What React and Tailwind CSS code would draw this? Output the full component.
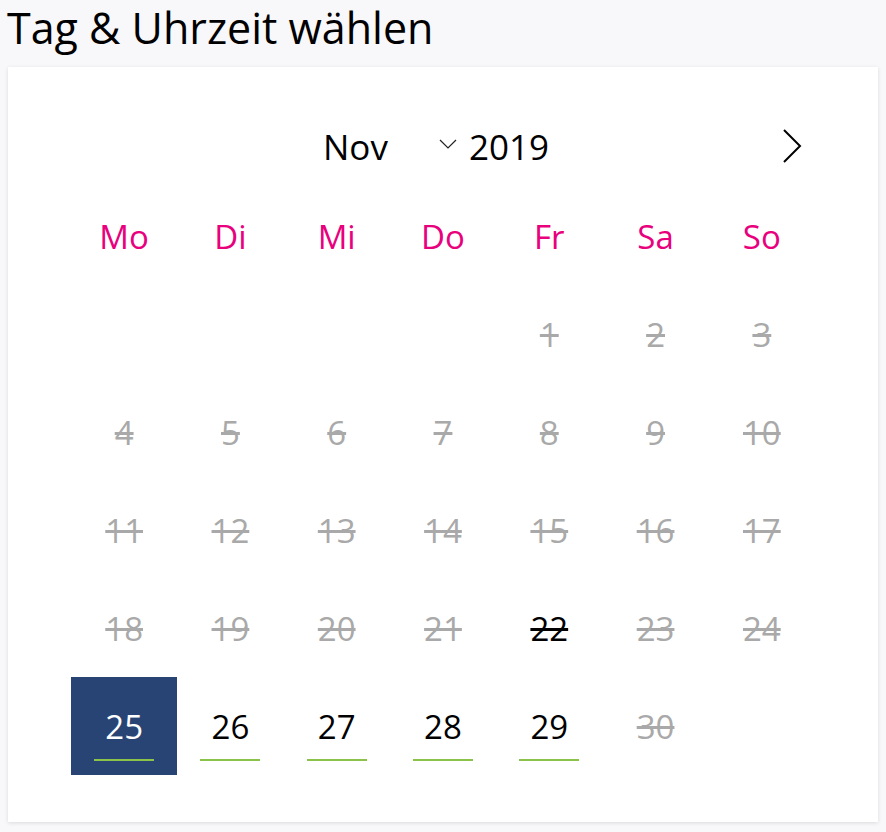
// Datepicker: Tag & Uhrzeit wählen
const WEEKDAYS = ['Mo', 'Di', 'Mi', 'Do', 'Fr', 'Sa', 'So'];

// Nov 2019 starts on Friday -> 4 empty cells
const OFFSET = 4;
const AVAILABLE = [25, 26, 27, 28, 29];
const SELECTED = 25;
const TODAY = 22;

function ChevronRight() {
  return (
    <svg width="22" height="36" viewBox="0 0 22 36" fill="none">
      <path d="M3 2 L19 18 L3 34" stroke="#000" strokeWidth="2" />
    </svg>
  );
}

function ChevronDown() {
  return (
    <svg width="18" height="10" viewBox="0 0 18 10" fill="none">
      <path d="M1 1 L9 9 L17 1" stroke="#222" strokeWidth="1.2" />
    </svg>
  );
}

function DayCell({ day }) {
  if (!day) return <div className="h-[98px]" />;
  const isSelected = day === SELECTED;
  const isAvailable = AVAILABLE.includes(day);
  const isToday = day === TODAY;

  let textCls = 'text-[#a9a9a9] line-through';
  if (isToday) textCls = 'text-black line-through';
  if (isAvailable) textCls = 'text-black';
  if (isSelected) textCls = 'text-white';

  return (
    <div
      className={`relative h-[98px] flex items-center justify-center ${
        isSelected ? 'bg-[#284475]' : ''
      }`}
    >
      <span className={`text-[33px] leading-none ${textCls}`}>{day}</span>
      {isAvailable && (
        <span className="absolute left-1/2 -translate-x-1/2 bottom-[14px] w-[60px] h-[2px] bg-[#8bc34a]" />
      )}
    </div>
  );
}

export default function App() {
  const cells = [];
  for (let i = 0; i < OFFSET; i++) cells.push(null);
  for (let d = 1; d <= 30; d++) cells.push(d);

  return (
    <div
      className="min-h-[832px] bg-[#f8f8fa] text-black pb-[10px]"
      style={{ fontFamily: '"Open Sans", "Noto Sans", sans-serif' }}
    >
      <h1 className="px-[7px] text-[43px] leading-[56px] h-[67px]">Tag &amp; Uhrzeit wählen</h1>

      <div className="mx-[8px] bg-white shadow-[0_1px_4px_rgba(0,0,0,0.12)] px-[63px] pt-[44px] pb-[47px]">
        {/* month / year header */}
        <div className="h-[70px] flex items-center justify-between px-[12px]">
          <div className="invisible w-[22px]">
            <ChevronRight />
          </div>
          <div className="flex items-center text-[35px] leading-none mr-[14px]">
            <span className="w-[116px]">Nov</span>
            <span className="mr-[12px] mb-[4px]">
              <ChevronDown />
            </span>
            <span>2019</span>
          </div>
          <ChevronRight />
        </div>

        {/* weekdays */}
        <div className="grid grid-cols-7 mt-[7px]">
          {WEEKDAYS.map((w) => (
            <div key={w} className="h-[97px] flex items-center justify-center text-[33px] text-[#e8007d]">
              {w}
            </div>
          ))}
        </div>

        {/* days */}
        <div className="grid grid-cols-7">
          {cells.map((d, i) => (
            <DayCell key={i} day={d} />
          ))}
        </div>
      </div>
    </div>
  );
}
